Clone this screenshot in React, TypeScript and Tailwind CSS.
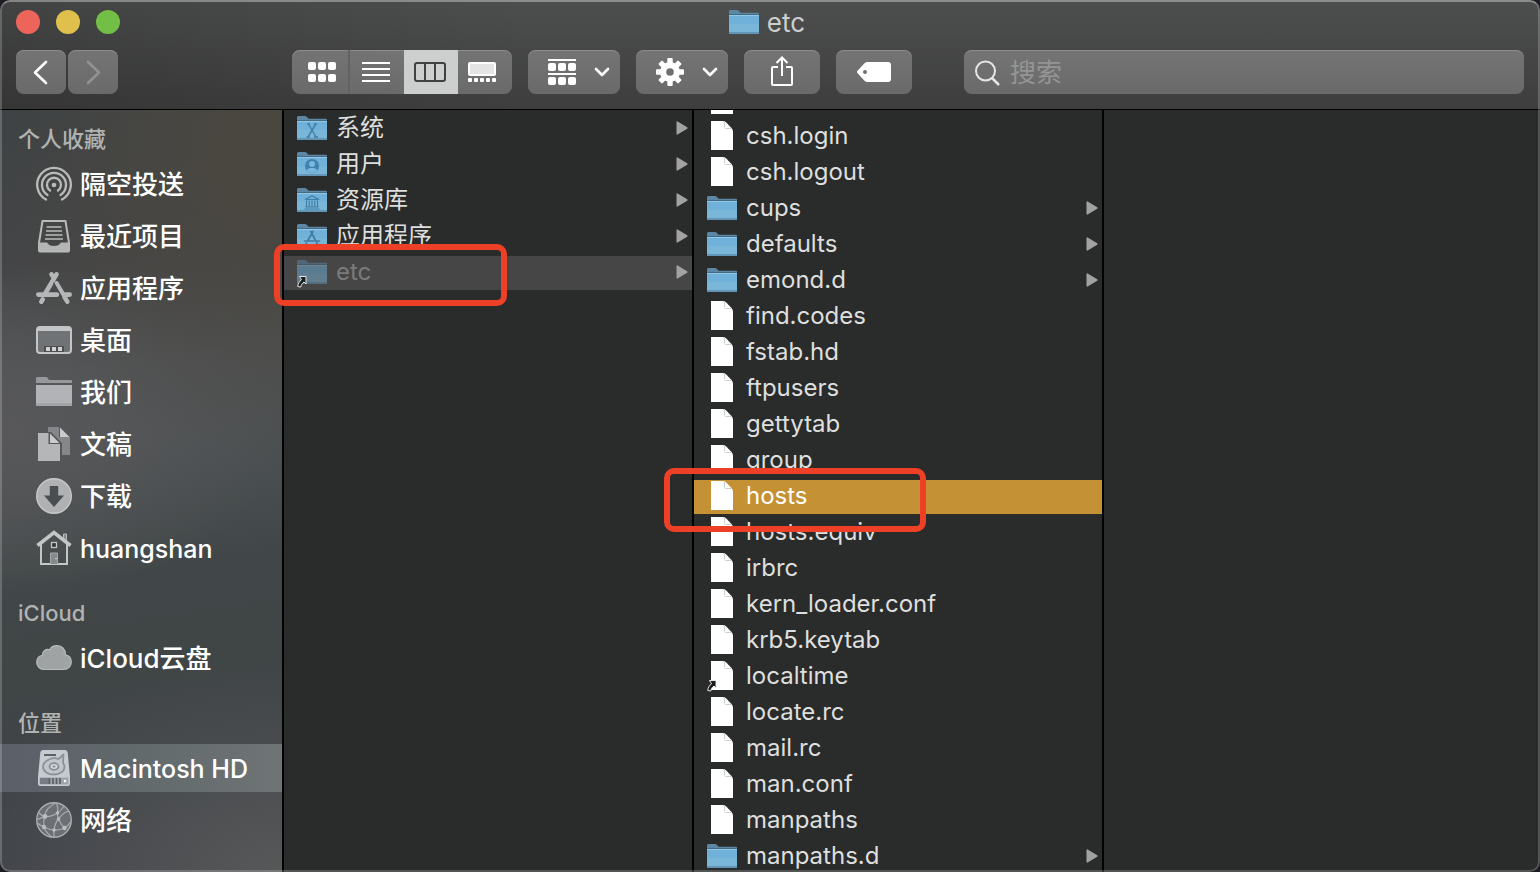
import React, { useState } from "react";
import clsx from "clsx";

type IconKind = "file" | "folder" | "system" | "users" | "library" | "apps";

interface Entry {
  name: string;
  kind: IconKind;
  alias?: boolean;
}

interface Place {
  name: string;
  icon: () => React.ReactElement;
  latin?: boolean;
}

const rootEntries: Entry[] = [
  { name: "系统", kind: "system" },
  { name: "用户", kind: "users" },
  { name: "资源库", kind: "library" },
  { name: "应用程序", kind: "apps" },
  { name: "etc", kind: "folder", alias: true },
];

const etcEntries: Entry[] = [
  { name: "", kind: "file" },
  { name: "csh.login", kind: "file" },
  { name: "csh.logout", kind: "file" },
  { name: "cups", kind: "folder" },
  { name: "defaults", kind: "folder" },
  { name: "emond.d", kind: "folder" },
  { name: "find.codes", kind: "file" },
  { name: "fstab.hd", kind: "file" },
  { name: "ftpusers", kind: "file" },
  { name: "gettytab", kind: "file" },
  { name: "group", kind: "file" },
  { name: "hosts", kind: "file" },
  { name: "hosts.equiv", kind: "file" },
  { name: "irbrc", kind: "file" },
  { name: "kern_loader.conf", kind: "file" },
  { name: "krb5.keytab", kind: "file" },
  { name: "localtime", kind: "file", alias: true },
  { name: "locate.rc", kind: "file" },
  { name: "mail.rc", kind: "file" },
  { name: "man.conf", kind: "file" },
  { name: "manpaths", kind: "file" },
  { name: "manpaths.d", kind: "folder" },
];

const sections: { title: string; places: Place[] }[] = [
  {
    title: "个人收藏",
    places: [
      { name: "隔空投送", icon: AirDropIcon },
      { name: "最近项目", icon: RecentsIcon },
      { name: "应用程序", icon: AppsIcon },
      { name: "桌面", icon: DesktopIcon },
      { name: "我们", icon: PlainFolderIcon },
      { name: "文稿", icon: DocumentsIcon },
      { name: "下载", icon: DownloadsIcon },
      { name: "huangshan", icon: HomeIcon, latin: true },
    ],
  },
  { title: "iCloud", places: [{ name: "iCloud云盘", icon: CloudIcon }] },
  {
    title: "位置",
    places: [
      { name: "Macintosh HD", icon: DiskIcon, latin: true },
      { name: "网络", icon: NetworkIcon },
    ],
  },
];

const toolButton =
  "flex h-11 shrink-0 items-center justify-center rounded-lg bg-linear-to-b from-[#737473] to-[#696a69] shadow-[inset_0_1px_0_#8b8c8b]";

export default function App() {
  const [place, setPlace] = useState("Macintosh HD");
  const [file, setFile] = useState("hosts");

  return (
    <div className="h-screen bg-[#1d1c24]">
      <div className="relative flex h-full flex-col overflow-hidden rounded-[10px] bg-[#2a2c2b] font-[Inter,'Noto_Sans_CJK_SC',sans-serif]">
        <Toolbar />

        <div className="flex min-h-0 flex-1">
          <Sidebar place={place} onSelect={setPlace} />

          <section className="w-[410px] shrink-0 overflow-hidden border-r-2 border-black pt-0.5">
            <ul>
              {rootEntries.map((entry) => (
                <FileRow key={entry.name} entry={entry} state={entry.name === "etc" ? "open" : "idle"} />
              ))}
            </ul>
          </section>

          <section className="w-[410px] shrink-0 overflow-hidden border-r-2 border-black">
            {/* scrolled down, so the first row is mostly out of view */}
            <ul className="-mt-[26px]">
              {etcEntries.map((entry) => (
                <FileRow
                  key={entry.name}
                  entry={entry}
                  state={entry.name === file ? "selected" : "idle"}
                  onSelect={() => setFile(entry.name)}
                />
              ))}
            </ul>
          </section>

          <section className="flex-1" />
        </div>

        {/* Highlight frames */}
        <div className="pointer-events-none absolute left-[274px] top-[244px] h-[62px] w-[233px] rounded-[10px] border-6 border-[#ee4027]" />
        <div className="pointer-events-none absolute left-[664px] top-[468px] h-[64px] w-[262px] rounded-[10px] border-6 border-[#ee4027]" />

        {/* Window edge */}
        <div className="pointer-events-none absolute inset-0 rounded-[10px] border-2 border-white/20 border-t-white/35" />
      </div>
    </div>
  );
}

function Toolbar() {
  return (
    <header className="shrink-0 border-b border-black bg-[linear-gradient(to_right,rgba(0,0,0,0.14),transparent_35%),linear-gradient(to_bottom,#4d4f4e,#3d3e3d)] px-4 pb-[15px]">
      <div className="grid h-[46px] grid-cols-3 items-center">
        <div className="flex gap-4 pb-0.5">
          <button aria-label="关闭" className="size-6 rounded-full bg-[#ed655a]" />
          <button aria-label="最小化" className="size-6 rounded-full bg-[#e0c04c]" />
          <button aria-label="缩放" className="size-6 rounded-full bg-[#72be47]" />
        </div>
        <h1 className="flex items-center justify-center gap-2 pr-1.5 text-[26px] leading-8 text-[#cdcecd]">
          <svg width="30" height="26" viewBox="0 4 30 26">
            <FolderShape />
          </svg>
          etc
        </h1>
      </div>

      <div className="mt-1 flex items-center">
        <div className="flex gap-0.5">
          <button aria-label="后退" className={clsx(toolButton, "w-[50px]")}>
            <Chevron d="M15 2 4 12.5 15 23" color="#ffffff" />
          </button>
          <button aria-label="前进" className={clsx(toolButton, "w-[50px]")}>
            <Chevron d="M5 2 16 12.5 5 23" color="#919291" />
          </button>
        </div>

        <div className="ml-[174px] flex gap-4">
          <div className={clsx(toolButton, "overflow-hidden")}>
            <button aria-label="图标" className="flex h-full w-[58px] items-center justify-center border-r-2 border-[#616261] pl-1">
              <svg width="28" height="20" fill="#fff">
                {[0, 10, 20].map((x) => (
                  <React.Fragment key={x}>
                    <rect x={x} y="0" width="8" height="8" rx="2" />
                    <rect x={x} y="12" width="8" height="8" rx="2" />
                  </React.Fragment>
                ))}
              </svg>
            </button>
            <button aria-label="列表" className="flex h-full w-[54px] items-center justify-center pr-0.5">
              <svg width="28" height="20" fill="#fff">
                <path d="M0 0h28v2H0zM0 6h28v2H0zM0 12h28v2H0zM0 18h28v2H0z" />
              </svg>
            </button>
            <button aria-label="分栏" className="flex h-full w-[54px] items-center justify-center bg-[#cdcfce] pr-0.5">
              <svg width="32" height="20" fill="none" stroke="#3f403f" strokeWidth="2">
                <rect x="1" y="1" width="30" height="18" rx="2" />
                <path d="M11 1v18M21 1v18" />
              </svg>
            </button>
            <button aria-label="画廊" className="flex h-full w-[54px] items-center justify-center pr-1.5">
              <svg width="28" height="20" fill="#fff">
                <rect x="1" y="1" width="26" height="12" rx="1" fill="#e4e4e4" stroke="#fff" strokeWidth="2" />
                {[0, 6, 12, 18, 24].map((x) => (
                  <rect key={x} x={x} y="16" width="4" height="4" rx="1" />
                ))}
              </svg>
            </button>
          </div>

          <button aria-label="分组" className={clsx(toolButton, "w-[92px] gap-[18px] pl-2.5")}>
            <svg width="28" height="26" fill="#fff">
              <path d="M0 0h28v2H0zM0 14h28v2H0z" />
              {[0, 10, 20].map((x) => (
                <React.Fragment key={x}>
                  <rect x={x} y="4" width="8" height="8" rx="2" />
                  <rect x={x} y="18" width="8" height="8" rx="2" />
                </React.Fragment>
              ))}
            </svg>
            <DownArrow />
          </button>

          <button aria-label="操作" className={clsx(toolButton, "w-[92px] gap-[18px] pl-2.5")}>
            <svg width="28" height="28" viewBox="-14 -14 28 28">
              {[0, 45, 90, 135].map((a) => (
                <rect key={a} x="-2.7" y="-14" width="5.4" height="28" rx="1" fill="#fff" transform={`rotate(${a})`} />
              ))}
              <circle r="10" fill="#fff" />
              <circle r="3.8" fill="#6e6f6e" />
            </svg>
            <DownArrow />
          </button>

          <button aria-label="共享" className={clsx(toolButton, "w-[76px]")}>
            <svg width="24" height="32" fill="none" stroke="#fff" strokeWidth="2">
              <path d="M8 11H3a1 1 0 0 0-1 1v16a1 1 0 0 0 1 1h18a1 1 0 0 0 1-1V12a1 1 0 0 0-1-1h-5M12 20V1.5M6.500 7 12 1.500 17.500 7" />
            </svg>
          </button>

          <button aria-label="标签" className={clsx(toolButton, "w-[76px]")}>
            <svg width="34" height="20">
              <path
                d="M10.500 0H31a3 3 0 0 1 3 3v14a3 3 0 0 1-3 3H10.500a4 4 0 0 1-3-1.300L.8 11.500a2 2 0 0 1 0-3L7.500 1.300a4 4 0 0 1 3-1.300ZM8 8a2 2 0 1 0 0 4 2 2 0 0 0 0-4Z"
                fill="#fff"
                fillRule="evenodd"
              />
            </svg>
          </button>
        </div>

        <label className={clsx(toolButton, "ml-[52px] min-w-0 shrink flex-1 gap-2.5 pl-[11px] pr-3 pt-0.5")}>
          <svg className="shrink-0" width="25" height="26" fill="none" stroke="#e6e6e6" strokeWidth="2">
            <circle cx="10.500" cy="11" r="9.500" />
            <path d="m17 18 7 7" strokeWidth="2.500" />
          </svg>
          <input
            type="search"
            aria-label="搜索"
            placeholder="搜索"
            className="min-w-0 flex-1 bg-transparent text-[26px] leading-8 text-white outline-none placeholder:text-[#949594]"
          />
        </label>
      </div>
    </header>
  );
}

function Sidebar({ place, onSelect }: { place: string; onSelect: (name: string) => void }) {
  return (
    <nav className="w-[284px] shrink-0 overflow-hidden border-r-2 border-black bg-[radial-gradient(ellipse_110%_40%_at_100%_6%,#4a4741_20%,transparent),radial-gradient(ellipse_120%_28%_at_100%_100%,#565858,transparent),radial-gradient(ellipse_100%_22%_at_0%_42%,#58585a,transparent),linear-gradient(172deg,#3c4245_0%,#444547_20%,#505355_34%,#4e5254_44%,#414748_60%,#404546_72%,#3f414a_100%)] pt-2">
      {sections.map((section, i) => (
        <div key={section.title} className={i > 0 ? "mt-5" : ""}>
          <h2 className="flex h-[42px] items-center pl-[18px] text-[22px] leading-8 font-medium text-[#b1b3b3]">
            {section.title}
          </h2>
          <ul className="flex flex-col gap-1">
            {section.places.map(({ name, icon: Icon, latin }) => (
              <li key={name}>
                <button
                  onClick={() => onSelect(name)}
                  className={clsx(
                    "flex h-12 w-full items-center gap-2 pl-9 text-left leading-9 font-medium text-white",
                    latin ? "text-[25px]" : "text-[26px]",
                    name === place && "bg-linear-to-r from-[#5b5f69] via-[#626a6c] to-[#6f7475]"
                  )}
                >
                  <Icon />
                  <span className="pt-0.5">{name}</span>
                </button>
              </li>
            ))}
          </ul>
        </div>
      ))}
    </nav>
  );
}

interface FileRowProps {
  entry: Entry;
  state: "idle" | "open" | "selected";
  onSelect?: () => void;
}

function FileRow({ entry, state, onSelect }: FileRowProps) {
  return (
    <li className="pb-0.5">
      <button
        onClick={onSelect}
        className={clsx(
          "flex h-[34px] w-full items-center gap-[9px] pb-0.5 pl-[13px] pr-1 text-left text-2xl leading-8",
          state === "idle" && "text-[#dedfde]",
          state === "open" && "bg-[#464646] text-[#7b7b7b]",
          state === "selected" && "bg-[#c49134] text-white"
        )}
      >
        <EntryIcon entry={entry} dimmed={state === "open"} />
        <span className="flex-1">{entry.name}</span>
        {entry.kind !== "file" && (
          <svg width="12" height="14" viewBox="0 0 12 14">
            <path d="M.5 1.200Q.5 0 1.600.5L11.200 6.300q.8.700 0 1.400L1.600 13.500Q.5 14 .5 12.800Z" fill="#a2a2a2" />
          </svg>
        )}
      </button>
    </li>
  );
}

function EntryIcon({ entry, dimmed }: { entry: Entry; dimmed: boolean }) {
  return (
    <svg className="shrink-0" width="30" height="34" viewBox="0 -1 30 34">
      {entry.kind === "file" ? (
        <g>
          <path d="M4 1h11.500c2 0 3 .8 4.500 2.300l4 4.200c1.500 1.600 2 2.800 2 4.500v18H4Z" fill="#fff" />
          <path d="M17.500 1.500v6q0 1 1 1H25" fill="none" stroke="#cfcfcf" strokeWidth="1" />
        </g>
      ) : (
        <g opacity={dimmed ? 0.5 : 1}>
          <FolderShape />
          <FolderGlyph kind={entry.kind} />
        </g>
      )}
      {entry.alias && (
        <path
          d="M2.500 20.500h6.500v7.500L7 26C4.800 27.500 4.200 29 3.800 31L.8 30.500c.2-3 1.500-5 3.700-6.800Z"
          fill="#1c1c1c"
          stroke="#e8e8e8"
          strokeWidth="1"
        />
      )}
    </svg>
  );
}

function FolderShape() {
  return (
    <>
      <path d="M0 5.500Q0 4 1.500 4H8q1 0 1.700.8L11 6.200q.5.600 1.500.600H29q1 0 1 1V12H0Z" fill="#5c88a5" />
      <path d="M0 8h30v1H0Z" fill="#456a83" />
      <path d="M0 9h30v18q0 1-1 1H1q-1 0-1-1Z" fill="#6fb1d9" />
      <path d="M0 18h30v9H0Z" fill="#7ab6d8" />
      <path d="M0 9h30v1H0Z" fill="#8fc8e8" />
      <path d="M0 26h30v1q0 1-1 1H1q-1 0-1-1Z" fill="#6396b6" />
    </>
  );
}

function FolderGlyph({ kind }: { kind: IconKind }) {
  switch (kind) {
    case "system":
      return (
        <path d="M10 12h3M17 12h3M9.500 25h3.500M17 25h4M11.500 12l7.500 13M18.700 12 11 25" fill="none" stroke="#417fa9" strokeWidth="1.500" />
      );
    case "users":
      return (
        <>
          <circle cx="15" cy="18" r="7" fill="#3f81ae" />
          <circle cx="15" cy="16" r="3" fill="#7ab7dc" />
          <path d="M9.800 22.500c.6-2.200 2.600-2.500 5.200-2.500s4.600.3 5.200 2.500A7 7 0 0 1 15 25a7 7 0 0 1-5.200-2.500Z" fill="#7ab7dc" />
        </>
      );
    case "library":
      return (
        <path
          d="M8 15.500 15 12l7 3.500ZM9.500 16.500v6.500M12.200 16.500v6.500M15 16.500v6.500M17.800 16.500v6.500M20.500 16.500v6.500M8.500 23h13M7.500 25h15"
          fill="none"
          stroke="#3f7ca6"
          strokeWidth="1.200"
        />
      );
    case "apps":
      return (
        <path
          d="M16 11.500 10.500 21M13.800 11.500 20.500 24M7.500 21h9.500M20 21h2.500M9.500 23l-.8 1.500"
          fill="none"
          stroke="#3f7ca6"
          strokeWidth="1.700"
          strokeLinecap="round"
        />
      );
    default:
      return null;
  }
}

function Chevron({ d, color }: { d: string; color: string }) {
  return (
    <svg width="20" height="25" fill="none" stroke={color} strokeWidth="2.600" strokeLinecap="round" strokeLinejoin="round">
      <path d={d} />
    </svg>
  );
}

function DownArrow() {
  return (
    <svg width="16" height="10" fill="none" stroke="#fff" strokeWidth="2.600" strokeLinecap="round" strokeLinejoin="round">
      <path d="M2 2l6 6 6-6" />
    </svg>
  );
}

/* Sidebar icons, all on a 36px grid */

function SideIcon({ children }: { children: React.ReactNode }) {
  return (
    <svg className="shrink-0" width="36" height="36" viewBox="0 0 36 36">
      {children}
    </svg>
  );
}

function AirDropIcon() {
  return (
    <SideIcon>
      <g fill="none" stroke="#b9bbbb" strokeWidth="2.300" strokeLinecap="round">
        <path d="M10 33.500A16.800 16.800 0 1 1 26 33.500" />
        <path d="M11.500 29A12 12 0 1 1 24.500 29" />
        <path d="M14 24.500A7 7 0 1 1 22 24.500" />
      </g>
      <circle cx="18" cy="19" r="2.300" fill="#b9bbbb" />
    </SideIcon>
  );
}

function RecentsIcon() {
  return (
    <SideIcon>
      <path d="M6.500 3h23L33 25v7.500a1 1 0 0 1-1 1H4a1 1 0 0 1-1-1V25Z" fill="none" stroke="#b9bbbb" strokeWidth="2" strokeLinejoin="round" />
      <path d="M10.500 9h15M10 13h16M9.500 17h17M9 21h18" stroke="#b9bbbb" strokeWidth="1.600" />
      <path d="M3 24.500h7.500c1.500 0 1.500 3.500 7.500 3.500s6-3.500 7.500-3.500H33V33H3Z" fill="#b3b5b5" />
    </SideIcon>
  );
}

function AppsIcon() {
  return (
    <SideIcon>
      <g fill="none" stroke="#b4b6b7" strokeWidth="4.600" strokeLinecap="round">
        <path d="M20.500 4.300 9.500 23M15.500 4.300l2 3.400M20.500 13.500 31.300 31.700M6.700 29.500l-1.400 2.200" />
        <path d="M2.300 24.600H21M29 24.600h4.700" />
      </g>
      <path d="m17.500 12.500 8.500 15" stroke="#47494a" strokeWidth="1.200" />
    </SideIcon>
  );
}

function DesktopIcon() {
  return (
    <SideIcon>
      <rect x="1" y="5" width="34" height="26" rx="3" fill="#707375" stroke="#c3c5c6" strokeWidth="2" />
      <path d="M1 7a2 2 0 0 1 2-2h30a2 2 0 0 1 2 2v2H1Z" fill="#c3c5c6" />
      <path d="M8 24h20v6H8Z" fill="#4c4e50" />
      <path d="M10 25h4v4h-4zM16 25h4v4h-4zM22 25h4v4h-4z" fill="#d0d2d3" />
    </SideIcon>
  );
}

function PlainFolderIcon() {
  return (
    <SideIcon>
      <path d="M0 4.500Q0 3 1.500 3H10q1 0 1.700 1l1.300 2H35q1 0 1 1v2H0Z" fill="#96989b" />
      <path d="M0 11h36v19.500q0 1.500-1.500 1.500h-33Q0 32 0 30.500Z" fill="#b1b3b6" />
      <path d="M0 29h36v1.500q0 1.500-1.500 1.500h-33Q0 32 0 30.500Z" fill="#a2a4a7" />
    </SideIcon>
  );
}

function DocumentsIcon() {
  return (
    <SideIcon>
      <path d="M12 1h11v10h11v18h-8V17L15 6h-3Z" fill="#85888b" />
      <path d="M24 1.500 33.500 11H24Z" fill="#c9cbcd" />
      <path d="M2 7h10.500v11H24v17H2Z" fill="#b4b6b8" />
      <path d="M14 7.500 23.500 17H14Z" fill="#c9cbcd" />
    </SideIcon>
  );
}

function DownloadsIcon() {
  return (
    <SideIcon>
      <circle cx="18" cy="18" r="17.300" fill="#afb1b3" stroke="#c6c8ca" strokeWidth="1.400" />
      <path d="M13.800 8h8.400v9.500H28L18 29 8 17.500h5.800Z" fill="#4a4e51" />
    </SideIcon>
  );
}

function HomeIcon() {
  return (
    <SideIcon>
      <path d="M27.500 4h3v9l-3-2.500Z" fill="#85888a" stroke="#b9bcbd" strokeWidth="1" />
      <path d="M5 14v20h26V14" fill="none" stroke="#c3c6c7" strokeWidth="2" />
      <path d="m1.500 15.500 16.500-13 16.500 13" fill="none" stroke="#c3c6c7" strokeWidth="3.600" />
      <rect x="15.500" y="12.500" width="5" height="5" fill="#33383a" stroke="#c3c6c7" strokeWidth="1.300" />
      <path d="M14.500 34V23h7v11" fill="#85898b" stroke="#a5a8aa" strokeWidth="1" />
      <circle cx="20" cy="28.500" r=".8" fill="#d8dadb" />
    </SideIcon>
  );
}

function CloudIcon() {
  return (
    <SideIcon>
      <path
        d="M8.500 29.500C4 29.500.7 26.500.7 22.300c0-3.400 2.300-6.200 5.600-6.900-.2-4 3.600-7 7.300-5.700C15 7 17.800 5.600 21 5.600c5 0 8.700 4 8.500 9.200 3.400.7 5.800 3.600 5.800 7.200 0 4.300-3.200 7.500-7.600 7.500Z"
        fill="#a0a3a4"
        stroke="#b7babb"
        strokeWidth="1.200"
      />
    </SideIcon>
  );
}

function DiskIcon() {
  return (
    <SideIcon>
      <path d="M7 0h22q2.500 0 2.700 2.500L34 27v6.500Q34 36 31.500 36h-27Q2 36 2 33.500V27L4.300 2.500Q4.500 0 7 0Z" fill="#c6cbd0" />
      <path d="M8 4h12v2H8Z" fill="#5c6168" />
      <path
        d="M27.500 4.500 22.500 9C20 8 16 8 13 9.500 9 11.300 7 14 7 16.800 7 21.500 12 24.500 17.500 24.500S28.500 21.500 28.500 17c0-1.500-.6-3-1.500-4Z"
        fill="#c0c6cb"
        stroke="#8b9198"
        strokeWidth="1.800"
        strokeLinejoin="round"
      />
      <ellipse cx="18" cy="16.500" rx="4.500" ry="3.300" fill="#d3d7db" stroke="#858b92" strokeWidth="1.800" />
      <ellipse cx="18" cy="16.500" rx="1.500" ry="1" fill="#858b92" />
      <path d="M3.500 27.500h29v6q0 1-1 1h-27q-1 0-1-1Z" fill="#a0a5ab" />
      <path d="M4 28h9v6H4Z" fill="#777d85" />
      <path d="M13.500 28v6M17 28v6M20.500 28v6M24 28v6" stroke="#5b6067" strokeWidth="1.700" />
      <circle cx="29" cy="31" r="1.200" fill="#fff" />
    </SideIcon>
  );
}

function NetworkIcon() {
  return (
    <SideIcon>
      <circle cx="18" cy="18" r="17.300" fill="#6c6f73" stroke="#abadb0" strokeWidth="1.400" />
      <g fill="none" stroke="#abadb0" strokeWidth="1.200">
        <path d="M19.500 1C12 5 9 9 8.500 14.500 7.500 18 7.500 22 8 25c1.500 4 4 7.500 8 10" />
        <path d="M3 11c2 1.800 4 3 5.500 3.500 5 .3 9.500-1 13-3.500 3-2 5-4.500 6.500-7" />
        <path d="M21.500 11c.7-3.500.5-6.500-1-10M21.500 11c-.2 2.500 0 4 1 6 1.500 3.500 3.500 6.500 6 9M22.500 17c-2.500 3-4 7-4.500 11-.3 2.500-.2 5 0 7" />
        <path d="M1.500 21c2 2 4 3.200 6.500 4 3.500 1.700 6.500 2.700 10 3 4 .2 7.500-.5 10.500-2 2.500-1.500 4.500-3.500 6-6" />
        <path d="M22.500 17c3-4.500 6.500-7 10.500-8M8.500 14.500C5.500 16 3 17 1 17.500" />
      </g>
      <g fill="#babcbf">
        <circle cx="9" cy="14.500" r="2.400" />
        <circle cx="21.500" cy="11" r="1.800" />
        <circle cx="22.500" cy="17" r="1.800" />
        <circle cx="8" cy="25" r="2.200" />
        <circle cx="18" cy="28" r="1.800" />
        <circle cx="28.500" cy="26" r="2.200" />
      </g>
    </SideIcon>
  );
}
